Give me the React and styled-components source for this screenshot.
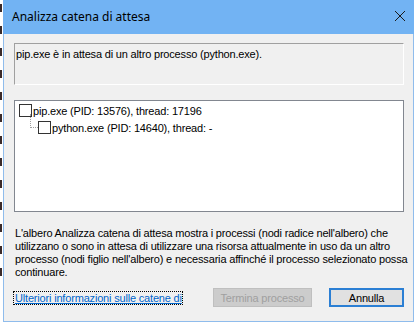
import React from 'react'
import styled, { createGlobalStyle } from 'styled-components'

const GlobalStyle = createGlobalStyle`
	html, body {
		margin: 0;
		padding: 0;
		background: #ffffff;
	}
`

const Page = styled.div`
	width: 417px;
	height: 323px;
	display: flex;
	align-items: flex-start;
	background: #ffffff;
	overflow: hidden;
`

const Backdrop = styled.div`
	width: 3px;
	height: 323px;
	display: flex;
	flex-direction: column;
	gap: 14px;
	padding-top: 4px;
	box-sizing: border-box;
	span {
		width: 2px;
		height: 8px;
		background: #3a2a2a;
	}
`

const Window = styled.div`
	width: 411px;
	height: 322px;
	box-sizing: border-box;
	border: 1px solid #8fbcec;
	border-top: none;
	background: #f0f0f0;
	display: flex;
	flex-direction: column;
`

const TitleBar = styled.div`
	height: 34px;
	margin: 0 -1px;
	background: #72b3f3;
	display: flex;
	align-items: center;
	justify-content: space-between;
	padding: 0 8px 2px 9px;
	box-sizing: border-box;
	font-family: 'Noto Sans', 'Open Sans', sans-serif;
	font-size: 12px;
	color: #000000;
`

const Client = styled.div`
	flex: 1;
	display: flex;
	flex-direction: column;
	padding: 9px 9px 0 10px;
	font-family: 'Liberation Sans', Arial, sans-serif;
	font-size: 11px;
	letter-spacing: -0.18px;
	color: #000000;
`

const InfoBox = styled.div`
	height: 42px;
	box-sizing: border-box;
	border-top: 1px solid #a0a0a0;
	border-left: 1px solid #a0a0a0;
	border-right: 1px solid #ffffff;
	border-bottom: 1px solid #ffffff;
	padding: 4px 0 0 1px;
	line-height: 13px;
`

const Tree = styled.div`
	margin-top: 15px;
	height: 112px;
	box-sizing: border-box;
	border: 1px solid #828790;
	background: #ffffff;
	padding-top: 1px;
	display: flex;
	flex-direction: column;
`

const Row = styled.div`
	height: 17px;
	display: flex;
	align-items: center;
	padding-left: ${p => p.indent}px;
	white-space: nowrap;
`

const Connector = styled.span`
	width: 7px;
	height: 13px;
	align-self: flex-start;
	margin-top: -5px;
	border-left: 1px dotted #a0a0a0;
	border-bottom: 1px dotted #a0a0a0;
`

const Check = styled.span`
	width: 13px;
	height: 13px;
	box-sizing: border-box;
	border: 1px solid #333333;
	background: #ffffff;
	margin-right: 1px;
	flex-shrink: 0;
`

const Description = styled.p`
	margin: 15px 0 0 1px;
	line-height: 13px;
	white-space: nowrap;
`

const Footer = styled.div`
	margin-top: 9px;
	display: flex;
	align-items: center;
`

const Link = styled.a`
	color: #0066cc;
	text-decoration: underline;
	outline: 1px dotted #000000;
	outline-offset: 0;
	padding: 0 0 0 1px;
	line-height: 12px;
	white-space: nowrap;
	cursor: pointer;
`

const Buttons = styled.div`
	margin-left: auto;
	display: flex;
	gap: 17px;
`

const Button = styled.button`
	width: ${p => p.width}px;
	height: 19px;
	box-sizing: border-box;
	font-family: 'Liberation Sans', Arial, sans-serif;
	font-size: 11px;
	letter-spacing: -0.18px;
	padding: 0;
	border: ${p => (p.primary ? '2px solid #2b7fd4' : '1px solid #bfbfbf')};
	background: ${p => (p.disabled ? '#cccccc' : '#e1e1e1')};
	color: ${p => (p.disabled ? '#a0a0a0' : '#000000')};
`

const CloseIcon = () => (
	<svg width="12" height="12" viewBox="0 0 12 12">
		<path d="M1 1 L11 11 M11 1 L1 11" stroke="#1a1a1a" strokeWidth="1" fill="none" />
	</svg>
)

const App = () => (
	<Page>
		<GlobalStyle />
		<Backdrop>
			<span />
			<span />
			<span />
			<span />
			<span />
			<span />
			<span />
			<span />
			<span />
			<span />
			<span />
			<span />
			<span />
		</Backdrop>
		<Window>
			<TitleBar>
				<span>Analizza catena di attesa</span>
				<CloseIcon />
			</TitleBar>
			<Client>
				<InfoBox>pip.exe è in attesa di un altro processo (python.exe).</InfoBox>
				<Tree>
					<Row indent={4}>
						<Check />
						pip.exe (PID: 13576), thread: 17196
					</Row>
					<Row indent={15}>
						<Connector />
						<Check />
						python.exe (PID: 14640), thread: -
					</Row>
				</Tree>
				<Description>
					L'albero Analizza catena di attesa mostra i processi (nodi radice nell'albero) che
					<br />
					utilizzano o sono in attesa di utilizzare una risorsa attualmente in uso da un altro
					<br />
					processo (nodi figlio nell'albero) e necessaria affinché il processo selezionato possa
					<br />
					continuare.
				</Description>
				<Footer>
					<Link>Ulteriori informazioni sulle catene di</Link>
					<Buttons>
						<Button width={99} disabled>
							Termina processo
						</Button>
						<Button width={75} primary>
							Annulla
						</Button>
					</Buttons>
				</Footer>
			</Client>
		</Window>
	</Page>
)

export default App
